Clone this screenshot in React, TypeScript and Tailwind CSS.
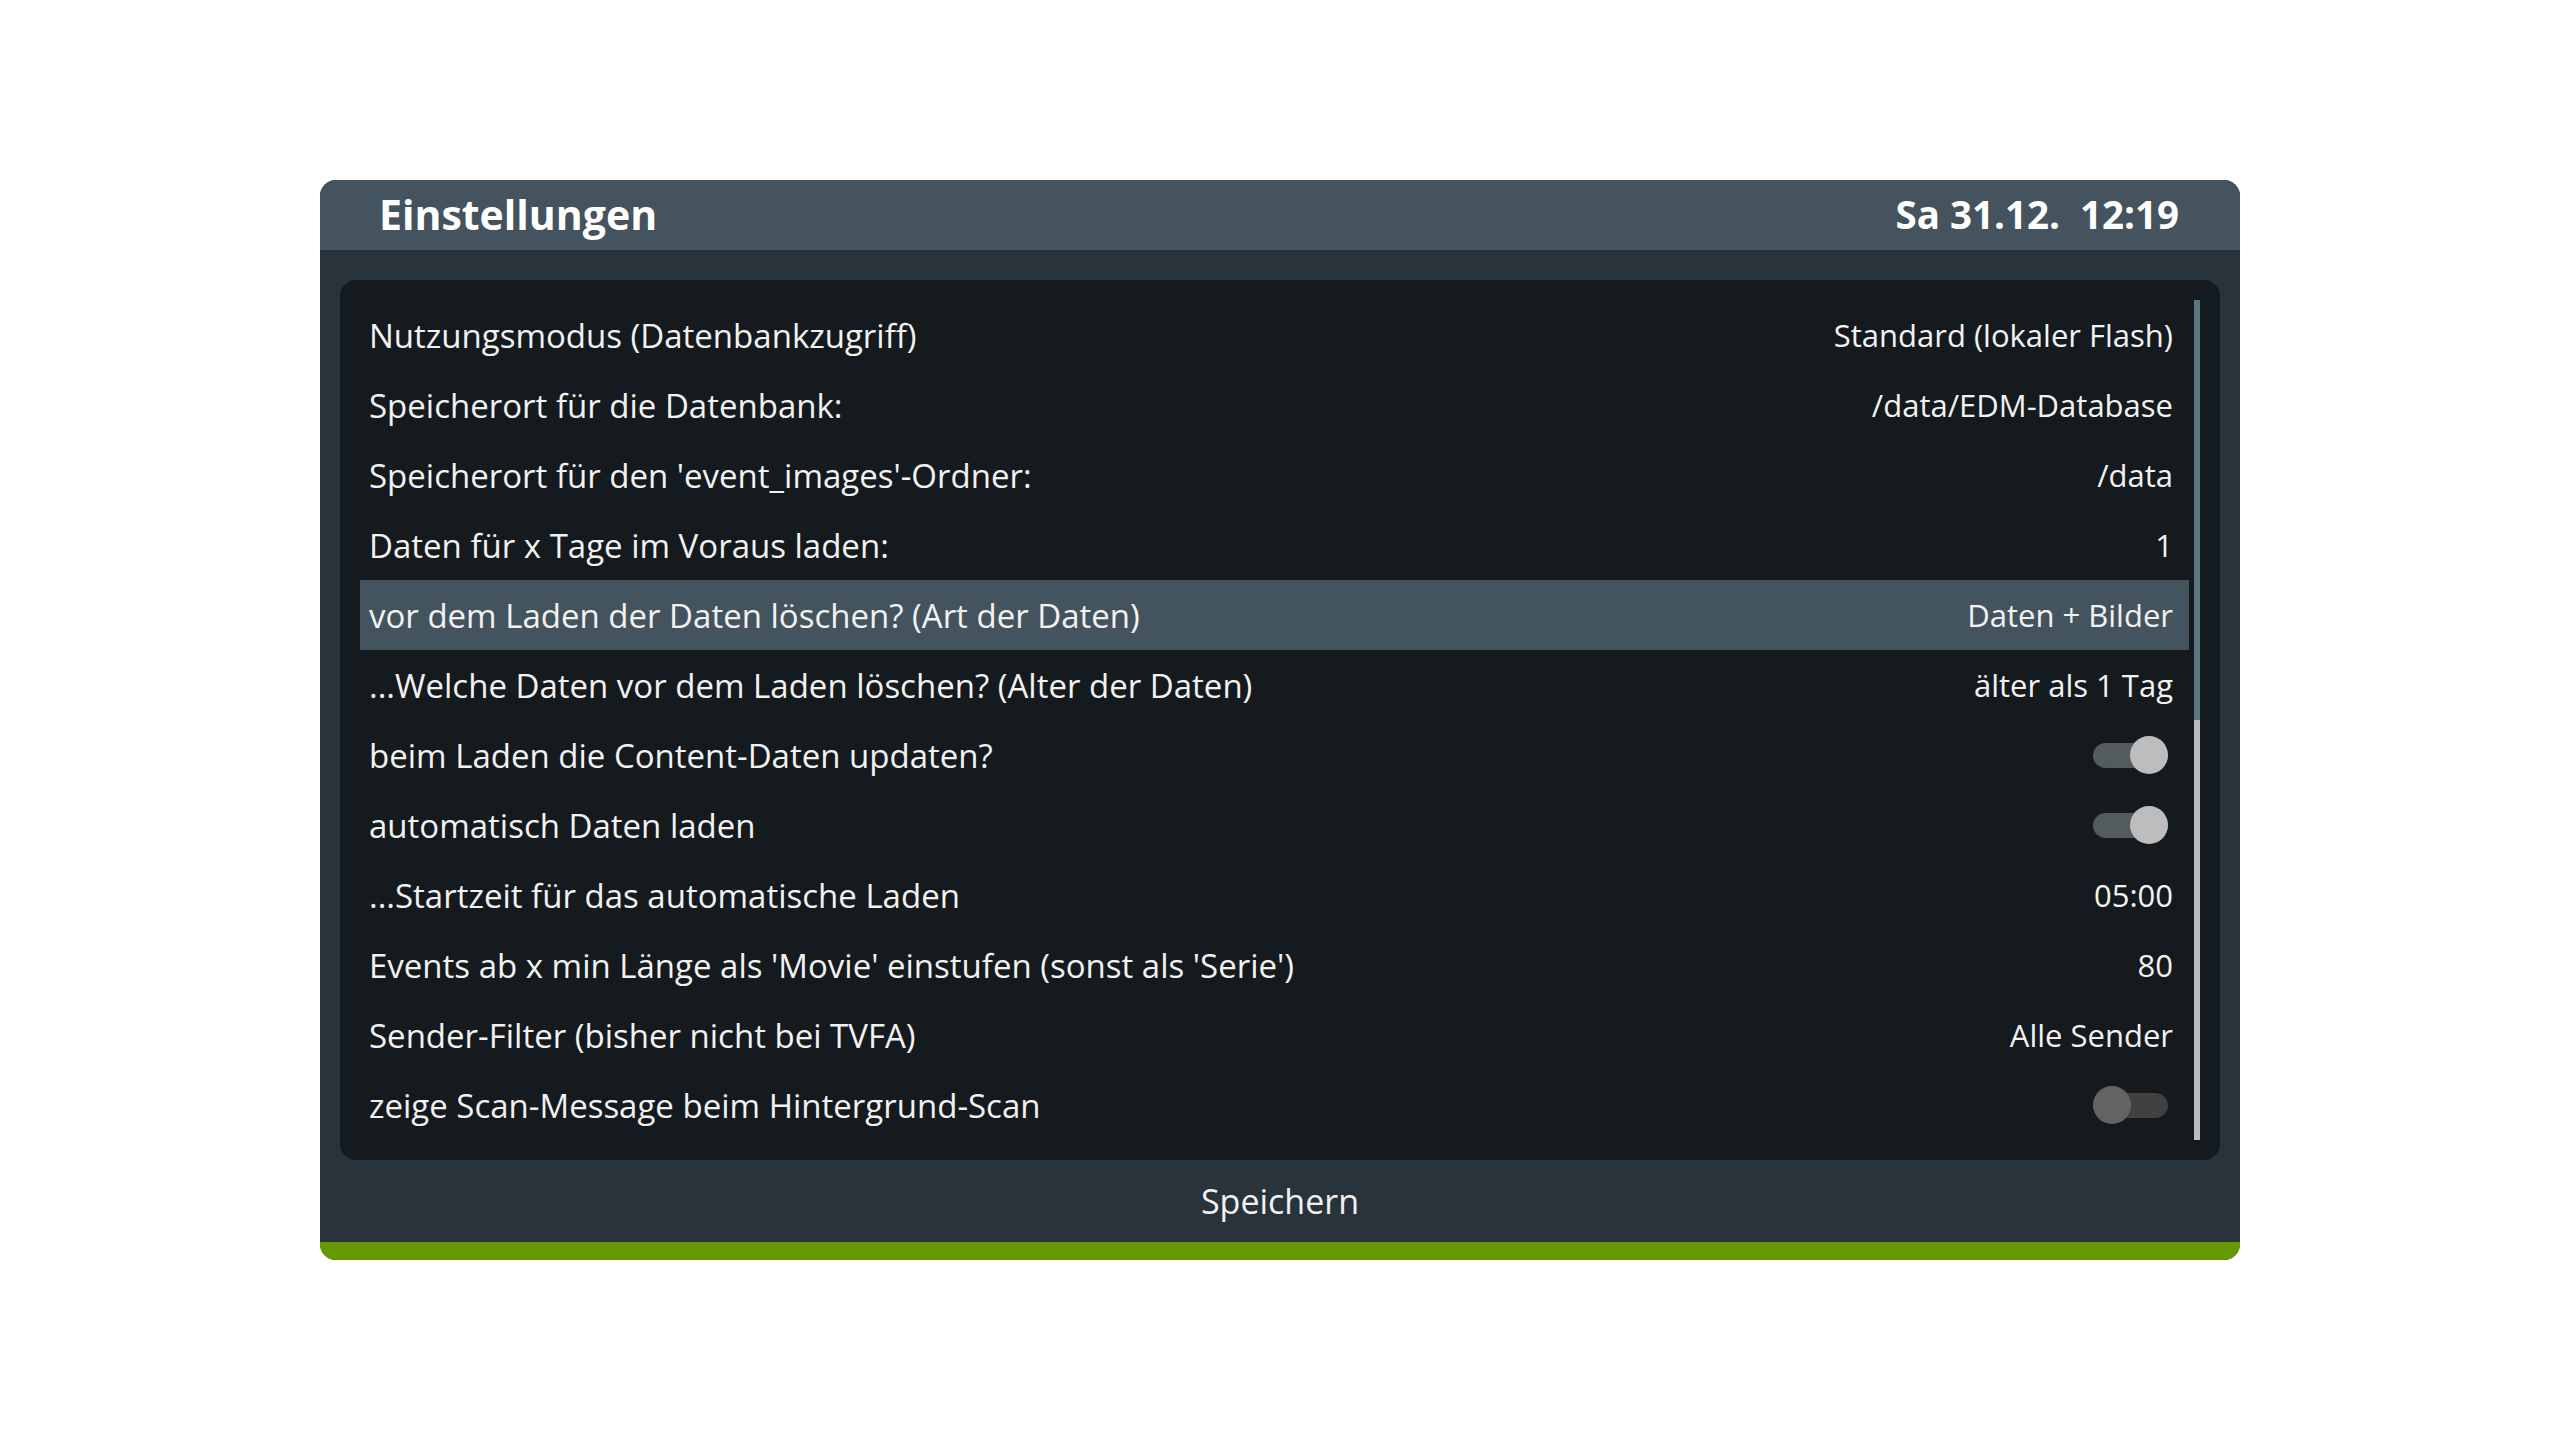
import React from "react";

type Row = { label: string; value?: string; toggle?: boolean };

const rows: Row[] = [
  { label: "Nutzungsmodus (Datenbankzugriff)", value: "Standard (lokaler Flash)" },
  { label: "Speicherort für die Datenbank:", value: "/data/EDM-Database" },
  { label: "Speicherort für den 'event_images'-Ordner:", value: "/data" },
  { label: "Daten für x Tage im Voraus laden:", value: "1" },
  { label: "vor dem Laden der Daten löschen? (Art der Daten)", value: "Daten + Bilder" },
  { label: "...Welche Daten vor dem Laden löschen? (Alter der Daten)", value: "älter als 1 Tag" },
  { label: "beim Laden die Content-Daten updaten?", toggle: true },
  { label: "automatisch Daten laden", toggle: true },
  { label: "...Startzeit für das automatische Laden", value: "05:00" },
  { label: "Events ab x min Länge als 'Movie' einstufen (sonst als 'Serie')", value: "80" },
  { label: "Sender-Filter (bisher nicht bei TVFA)", value: "Alle Sender" },
  { label: "zeige Scan-Message beim Hintergrund-Scan", toggle: false },
];

function Toggle({ on }: { on: boolean }) {
  return (
    <div className="relative w-[75px] h-[38px] flex items-center mr-[5px]">
      <div className={`w-[75px] h-[25px] rounded-full ${on ? "bg-[#535b5f]" : "bg-[#414141]"}`} />
      <div
        className={`absolute top-0 w-[38px] h-[38px] rounded-full ${on ? "right-0 bg-[#bdbdbd]" : "left-0 bg-[#636363]"}`}
      />
    </div>
  );
}

export default function App() {
  return (
    <div
      className="w-full h-screen bg-white flex items-center justify-center"
      style={{ fontFamily: '"Open Sans", "Noto Sans", sans-serif' }}
    >
      <div className="w-[1920px] h-[1080px] rounded-[16px] overflow-hidden flex flex-col bg-[#28333b]">
        <div className="h-[70px] bg-[#44535d] flex items-center justify-between pl-[59px] pr-[61px] font-bold text-white shrink-0">
          <span className="text-[41px]">Einstellungen</span>
          <span className="text-[38.5px] whitespace-pre">Sa 31.12.  12:19</span>
        </div>
        <div className="flex-1 flex flex-col pt-[30px] px-[20px]">
          <div className="h-[880px] bg-[#141a1d] rounded-[16px] p-[20px] flex gap-[5px]">
            <div className="flex-1 flex flex-col">
              {rows.map((r, i) => (
                <div
                  key={i}
                  className={`h-[70px] flex items-center justify-between pl-[9px] pr-[16px] text-[#f2f2f2] ${i === 4 ? "bg-[#44545e]" : ""}`}
                >
                  <span className="whitespace-nowrap text-[33px] pt-[2px]">{r.label}</span>
                  {r.toggle === undefined ? (
                    <span className="whitespace-nowrap text-[31px]">{r.value}</span>
                  ) : (
                    <Toggle on={r.toggle} />
                  )}
                </div>
              ))}
            </div>
            <div className="w-[6px] flex flex-col">
              <div className="h-[420px] bg-[#5b7682]" />
              <div className="flex-1 bg-[#bdbdbd]" />
            </div>
          </div>
          <div className="flex-1 flex items-center justify-center text-[34px] text-[#f2f2f2]">
            Speichern
          </div>
        </div>
        <div className="h-[18px] bg-[#669900] shrink-0" />
      </div>
    </div>
  );
}
